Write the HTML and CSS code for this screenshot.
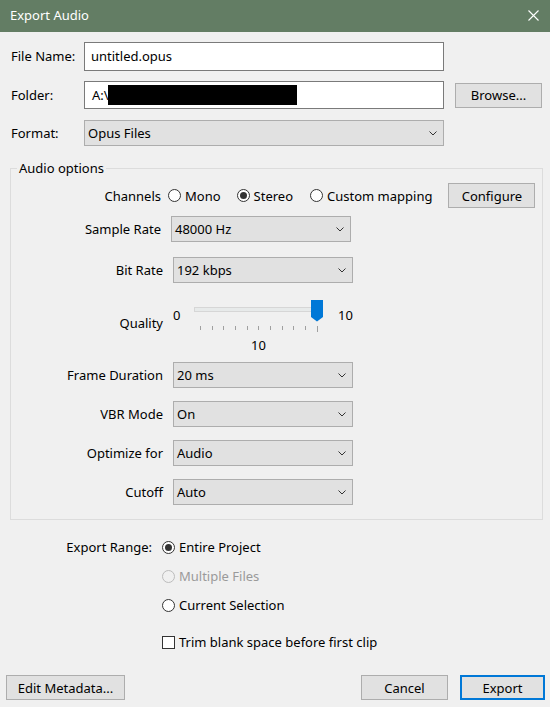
FILE: index.html
```html
<!DOCTYPE html>
<html>
<head>
<meta charset="utf-8">
<title>Export Audio</title>
<link rel="stylesheet" href="styles.css">
</head>
<body>
<div class="titlebar">
  <span class="title">Export Audio</span>
  <svg class="close" width="11" height="11" viewBox="0 0 11 11"><path d="M0.5 0.5 L10.5 10.5 M10.5 0.5 L0.5 10.5" stroke="#fff" stroke-width="1.1" fill="none"/></svg>
</div>

<div class="frow r1">
  <span class="flbl">File Name:</span>
  <div class="textbox">untitled.opus</div>
</div>
<div class="frow r2">
  <span class="flbl">Folder:</span>
  <div class="textbox">A:\<span class="redact"></span></div>
  <button class="btn browse">Browse...</button>
</div>
<div class="frow r3">
  <span class="flbl">Format:</span>
  <div class="select wide"><span>Opus Files</span><svg class="chev" width="8" height="5" viewBox="0 0 8 5"><path d="M0.5 0.5 L4 4 L7.5 0.5" stroke="#333" fill="none"/></svg></div>
</div>

<div class="group">
  <span class="legend">Audio options</span>
  <div class="orow ch">
    <span class="lbl">Channels</span>
    <span class="opt"><span class="radio"></span>Mono</span>
    <span class="opt"><span class="radio on"></span>Stereo</span>
    <span class="opt"><span class="radio"></span>Custom mapping</span>
    <button class="btn configure">Configure</button>
  </div>
  <div class="orow sr">
    <span class="lbl">Sample Rate</span>
    <div class="select"><span>48000 Hz</span><svg class="chev" width="8" height="5" viewBox="0 0 8 5"><path d="M0.5 0.5 L4 4 L7.5 0.5" stroke="#333" fill="none"/></svg></div>
  </div>
  <div class="orow br">
    <span class="lbl">Bit Rate</span>
    <div class="select"><span>192 kbps</span><svg class="chev" width="8" height="5" viewBox="0 0 8 5"><path d="M0.5 0.5 L4 4 L7.5 0.5" stroke="#333" fill="none"/></svg></div>
  </div>
  <div class="orow qrow">
    <span class="lbl qlbl">Quality</span>
    <div class="slider">
      <span class="smin">0</span>
      <div class="trackarea">
        <div class="track"></div>
        <svg class="thumb" width="12" height="22" viewBox="0 0 12 22"><path d="M0 0 H12 V17 L6 21.5 L0 17 Z" fill="#0078d7"/></svg>
      </div>
      <span class="smax">10</span>
      <svg class="ticks" width="129" height="6" viewBox="0 0 129 6">
        <g stroke="#a0a0a0" stroke-width="1">
          <line x1="6.5" y1="0" x2="6.5" y2="4"/>
          <line x1="18.5" y1="0" x2="18.5" y2="4"/>
          <line x1="29.5" y1="0" x2="29.5" y2="4"/>
          <line x1="41.5" y1="0" x2="41.5" y2="4"/>
          <line x1="53.5" y1="0" x2="53.5" y2="4"/>
          <line x1="64.5" y1="0" x2="64.5" y2="4"/>
          <line x1="76.5" y1="0" x2="76.5" y2="4"/>
          <line x1="88.5" y1="0" x2="88.5" y2="4"/>
          <line x1="99.5" y1="0" x2="99.5" y2="4"/>
          <line x1="111.5" y1="0" x2="111.5" y2="4"/>
          <line x1="123.5" y1="0" x2="123.5" y2="6"/>
        </g>
      </svg>
      <span class="sval">10</span>
    </div>
  </div>
  <div class="orow fd">
    <span class="lbl">Frame Duration</span>
    <div class="select"><span>20 ms</span><svg class="chev" width="8" height="5" viewBox="0 0 8 5"><path d="M0.5 0.5 L4 4 L7.5 0.5" stroke="#333" fill="none"/></svg></div>
  </div>
  <div class="orow nx">
    <span class="lbl">VBR Mode</span>
    <div class="select"><span>On</span><svg class="chev" width="8" height="5" viewBox="0 0 8 5"><path d="M0.5 0.5 L4 4 L7.5 0.5" stroke="#333" fill="none"/></svg></div>
  </div>
  <div class="orow nx">
    <span class="lbl">Optimize for</span>
    <div class="select"><span>Audio</span><svg class="chev" width="8" height="5" viewBox="0 0 8 5"><path d="M0.5 0.5 L4 4 L7.5 0.5" stroke="#333" fill="none"/></svg></div>
  </div>
  <div class="orow nx">
    <span class="lbl">Cutoff</span>
    <div class="select"><span>Auto</span><svg class="chev" width="8" height="5" viewBox="0 0 8 5"><path d="M0.5 0.5 L4 4 L7.5 0.5" stroke="#333" fill="none"/></svg></div>
  </div>
</div>

<div class="range">
  <span class="rlbl">Export Range:</span>
  <span class="ropt"><span class="radio on"></span>Entire Project</span>
  <span class="ropt disabled"><span class="radio"></span>Multiple Files</span>
  <span class="ropt"><span class="radio"></span>Current Selection</span>
  <span class="ropt trim"><span class="check"></span>Trim blank space before first clip</span>
</div>

<div class="footer">
  <button class="btn meta">Edit Metadata...</button>
  <span class="spacer"></span>
  <button class="btn cancel">Cancel</button>
  <button class="btn export">Export</button>
</div>
</body>
</html>
```

FILE: styles.css
```css
html, body {
  margin: 0;
  padding: 0;
}
body {
  width: 550px;
  height: 707px;
  overflow: hidden;
  background: #f0f0f0;
  color: #000;
  font-family: "Noto Sans", "Open Sans", sans-serif;
  font-size: 13px;
  line-height: 18px;
}

.titlebar {
  height: 32px;
  box-sizing: border-box;
  background: #637d64;
  color: #fff;
  display: flex;
  align-items: center;
  justify-content: space-between;
  padding: 0 11px 2px 10px;
  font-size: 13px;
}
.close {
  display: block;
}

.frow {
  display: flex;
  align-items: center;
  padding-left: 11px;
}
.flbl {
  width: 73px;
  flex: none;
}
.r1 {
  margin-top: 10px;
  height: 29px;
}
.r1 .flbl {
  margin-top: -2px;
}
.r2 {
  margin-top: 10px;
  height: 28px;
}
.r3 {
  margin-top: 11px;
  height: 26px;
}
.textbox {
  box-sizing: border-box;
  width: 360px;
  height: 100%;
  background: #fff;
  border: 1px solid #7a7a7a;
  padding-left: 6px;
  display: flex;
  align-items: center;
}
.r1 .textbox {
  padding-bottom: 2px;
}
.r2 .textbox {
  padding-left: 7px;
}
.redact {
  display: inline-block;
  width: 189px;
  height: 20px;
  background: #000;
  margin-left: -1px;
}

.btn {
  box-sizing: border-box;
  background: #e1e1e1;
  border: 1px solid #adadad;
  font: inherit;
  color: #000;
  padding: 0;
  margin: 0;
  display: flex;
  align-items: center;
  justify-content: center;
  height: 25px;
}
.browse {
  margin-left: 11px;
  width: 87px;
}

.select {
  box-sizing: border-box;
  background: #e1e1e1;
  border: 1px solid #adadad;
  height: 26px;
  width: 180px;
  display: flex;
  align-items: center;
  justify-content: space-between;
  padding: 0 6px 0 3px;
  flex: none;
}
.select.wide {
  width: 360px;
}
.chev {
  display: block;
}

.group {
  position: relative;
  margin: 22px 0 0 10px;
  width: 533px;
  box-sizing: border-box;
  border: 1px solid #dcdcdc;
  padding-bottom: 14px;
}
.legend {
  position: absolute;
  top: -10px;
  left: 6px;
  padding: 0 2px;
  background: #f0f0f0;
}

.orow {
  display: flex;
  align-items: center;
}
.lbl {
  width: 152px;
  margin-right: 10px;
  text-align: right;
  flex: none;
}
.ch {
  margin-top: 14px;
  height: 25px;
}
.ch .lbl {
  width: 150px;
  margin-right: 7px;
}
.opt {
  display: flex;
  align-items: center;
  gap: 4px;
  margin-right: 16px;
}
.opt:nth-of-type(3) {
  margin-right: 17px;
}
.configure {
  width: 87px;
}
.sr {
  margin-top: 8px;
  height: 26px;
}
.sr .lbl {
  width: 150px;
}
.br {
  margin-top: 15px;
  height: 26px;
}
.qrow {
  margin-top: 17px;
  align-items: flex-start;
}
.qlbl {
  padding-top: 14px;
}
.fd {
  margin-top: 8px;
  height: 26px;
}
.nx {
  margin-top: 13px;
  height: 26px;
}

.slider {
  display: grid;
  grid-template-columns: 21px 129px auto;
}
.smin {
  padding-top: 6px;
}
.smax {
  padding-top: 6px;
  padding-left: 15px;
}
.trackarea {
  position: relative;
  height: 22px;
}
.track {
  margin-top: 7px;
  width: 126px;
  height: 5px;
  box-sizing: border-box;
  background: #e7eaea;
  border: 1px solid #d6d6d6;
}
.thumb {
  position: absolute;
  right: 0;
  top: 0;
  display: block;
}
.ticks {
  grid-column: 2;
  display: block;
  margin-top: 2px;
}
.sval {
  grid-column: 2;
  text-align: center;
  margin-top: 4px;
}

.radio {
  width: 13px;
  height: 13px;
  box-sizing: border-box;
  border: 1px solid #333;
  border-radius: 50%;
  background: #fff;
  display: inline-flex;
  align-items: center;
  justify-content: center;
  flex: none;
}
.radio.on::after {
  content: "";
  width: 7px;
  height: 7px;
  border-radius: 50%;
  background: #333;
}
.check {
  width: 13px;
  height: 13px;
  box-sizing: border-box;
  border: 1px solid #333;
  background: #fff;
  flex: none;
}

.range {
  display: grid;
  grid-template-columns: 142px auto;
  grid-template-rows: 20px 20px 20px 20px;
  column-gap: 10px;
  row-gap: 9px;
  margin: 17px 0 0 10px;
}
.rlbl {
  grid-column: 1;
  grid-row: 1;
  text-align: right;
  line-height: 20px;
}
.ropt {
  grid-column: 2;
  display: flex;
  align-items: center;
  gap: 4px;
}
.ropt.disabled {
  color: #9a9a9a;
}
.ropt.disabled .radio {
  border-color: #bcbcbc;
  background: #f0f0f0;
}
.ropt.trim {
  margin-top: 16px;
}

.footer {
  display: flex;
  margin-top: 31px;
  padding: 0 5px 0 6px;
}
.spacer {
  flex: 1;
}
.meta {
  width: 119px;
}
.cancel {
  width: 87px;
  margin-right: 12px;
}
.export {
  width: 85px;
  border: 2px solid #0078d7;
}
```
